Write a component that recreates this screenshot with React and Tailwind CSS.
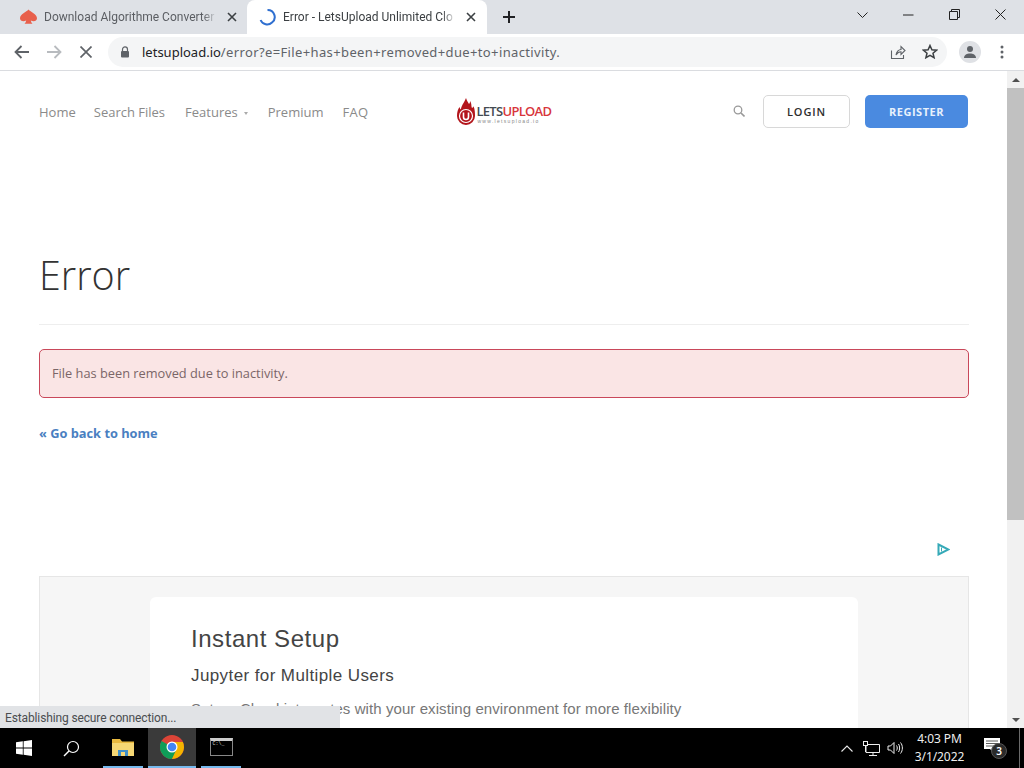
import React from "react";

const Ui = "font-['Noto_Sans','Open_Sans',sans-serif]";
const Chrome = "font-['Roboto','Noto_Sans',sans-serif]";

function CloseX({ size = 10, color = "#3c4043", width = 1.6 }) {
  return (
    <svg width={size} height={size} viewBox="0 0 10 10" className="shrink-0">
      <path d="M1 1L9 9M9 1L1 9" stroke={color} strokeWidth={width} fill="none" />
    </svg>
  );
}

function SpadeIcon() {
  return (
    <svg width="17" height="16" viewBox="0 0 17 16">
      <path d="M8.500 .5C10.500 3 17 5 17 9.300C17 12 13.800 13.300 10.800 11.600C11 12.800 11.500 13.700 12.500 14.800H4.500C5.500 13.700 6 12.800 6.200 11.600C3.200 13.300 0 12 0 9.300C0 5 6.500 3 8.500 .5Z" fill="#e8604c" />
    </svg>
  );
}

function Spinner() {
  return (
    <svg width="18" height="18" viewBox="0 0 18 18">
      <path d="M9.500 2A7 7 0 0 1 14 14.500A7 7 0 0 1 2.600 12" stroke="#2f6fd0" strokeWidth="2" fill="none" />
    </svg>
  );
}

function Tab({ active, icon, title, fade }) {
  return (
    <div className={`relative flex h-full items-center ${active ? "w-[240px] rounded-t-[8px] bg-white pl-[11px] pr-[11px]" : "w-[239px] pl-[12px] pr-[10px]"}`}>
      <span className={`flex shrink-0 items-center ${active ? "w-[25px]" : "w-[24px]"}`}>{icon}</span>
      <span className={`min-w-0 flex-1 overflow-hidden whitespace-nowrap text-[12px] leading-[16px] ${Chrome} ${active ? "text-[#3c4043]" : "text-[#5b5e63]"} ${fade}`}>
        {title}
      </span>
      <span className="ml-[10px] flex w-[10px] shrink-0 items-center">
        <CloseX />
      </span>
    </div>
  );
}

function TitleBar() {
  return (
    <div className="flex h-[34px] shrink-0 items-end bg-[#dee1e6] pl-[8px]">
      <Tab icon={<SpadeIcon />} title="Download Algorithme Converter" fade="[mask-image:linear-gradient(90deg,#000_92%,transparent)]" />
      <Tab active icon={<Spinner />} title="Error - LetsUpload Unlimited Clo" fade="[mask-image:linear-gradient(90deg,#000_92%,transparent)]" />
      <div className="ml-[15px] flex h-full items-center">
        <svg width="14" height="14" viewBox="0 0 14 14">
          <path d="M7 1V13M1 7H13" stroke="#202124" strokeWidth="2" />
        </svg>
      </div>
      <div className="ml-auto flex h-full items-start pt-[9px]">
        <svg width="11" height="10" viewBox="0 0 11 10" className="mr-[35px] mt-[1px]">
          <path d="M.5 2.500L5.500 7.500L10.500 2.500" stroke="#222" strokeWidth="1" fill="none" />
        </svg>
        <svg width="11" height="10" viewBox="0 0 11 10" className="mr-[35px] mt-[1px]">
          <path d="M0 5H10.500" stroke="#222" strokeWidth="1" fill="none" />
        </svg>
        <svg width="11" height="11" viewBox="0 0 11 11" className="mr-[35px]">
          <path d="M.5 2.500H8.500V10.500H.5ZM2.500 2.500V.5H10.500V8.500H8.500" stroke="#222" strokeWidth="1" fill="none" />
        </svg>
        <svg width="11" height="11" viewBox="0 0 11 11" className="mr-[18px]">
          <path d="M.5 .5L10.500 10.500M10.500 .5L.5 10.500" stroke="#222" strokeWidth="1" fill="none" />
        </svg>
      </div>
    </div>
  );
}

function Toolbar() {
  return (
    <div className="flex h-[37px] shrink-0 items-center border-b border-[#dadce0] bg-white pb-[1px]">
      <svg width="16" height="14" viewBox="0 0 16 14" className="ml-[14px]">
        <path d="M15 7H2M7.500 1L1.500 7L7.500 13" stroke="#5f6368" strokeWidth="1.800" fill="none" />
      </svg>
      <svg width="16" height="14" viewBox="0 0 16 14" className="ml-[16px]">
        <path d="M1 7H14M8.500 1L14.500 7L8.500 13" stroke="#b8bbbf" strokeWidth="1.800" fill="none" />
      </svg>
      <svg width="12" height="12" viewBox="0 0 12 12" className="ml-[18px]">
        <path d="M.5 .5L11.500 11.500M11.500 .5L.5 11.500" stroke="#5f6368" strokeWidth="1.700" fill="none" />
      </svg>
      <div className="ml-[16px] flex h-[30px] w-[839px] items-center rounded-full bg-[#f4f5f6] pl-[12px]">
        <svg width="10" height="12" viewBox="0 0 10 12">
          <path d="M2.500 5V3.400A2.500 2.500 0 0 1 7.500 3.400V5" stroke="#5f6368" strokeWidth="1.200" fill="none" />
          <rect x="1" y="5" width="8" height="6.500" rx="1" fill="#5f6368" />
        </svg>
        <span className="ml-[12px] text-[13px] leading-[18px] text-[#5f6368]">
          <span className="text-[#202124]">letsupload.io</span>
          <span className="tracking-[0.37px]">/error?e=File+has+been+removed+due+to+inactivity.</span>
        </span>
        <svg width="16" height="16" viewBox="0 0 16 16" className="ml-auto">
          <path d="M1.500 6.500V14.500H13.500V11M6 11C6.500 7.500 9 5.500 11 5.500V2.500L15 6.500L11 10.500V7.800C9.500 7.800 7.500 8.800 6 11Z" stroke="#5f6368" strokeWidth="1.100" fill="none" />
        </svg>
        <svg width="16" height="15" viewBox="0 0 16 15" className="ml-[16px] mr-[9px]">
          <path d="M8 1.500L9.900 5.800L14.500 6.200L11 9.200L12.100 13.700L8 11.300L3.900 13.700L5 9.200L1.500 6.200L6.100 5.800Z" stroke="#3c4043" strokeWidth="1.500" fill="none" />
        </svg>
      </div>
      <div className="ml-[12px] flex h-[22px] w-[22px] items-center justify-center rounded-full bg-[#dfe1e5]">
        <svg width="14" height="14" viewBox="0 0 14 14">
          <circle cx="7" cy="4" r="3" fill="#5f6368" />
          <path d="M1 13C1 9.800 4 8.500 7 8.500S13 9.800 13 13Z" fill="#5f6368" />
        </svg>
      </div>
      <svg width="4" height="14" viewBox="0 0 4 14" className="ml-[19px]">
        <circle cx="2" cy="2" r="1.500" fill="#5f6368" />
        <circle cx="2" cy="7" r="1.500" fill="#5f6368" />
        <circle cx="2" cy="12" r="1.500" fill="#5f6368" />
      </svg>
    </div>
  );
}

function Logo() {
  return (
    <div className="flex items-center">
      <svg width="18" height="27" viewBox="0 0 18 27" className="shrink-0">
        <path d="M9 0C10 3 11 4 12 6C13 5 13 4 13 3C15 6 14 8 15 10C16 9.500 16.500 9 16.500 8C18 12 18 15 18 18A9 9 0 0 1 0 18C0 14 1 11 2.500 9C3 10 3 11 4 11.500C4 8 7 5 9 0Z" fill="#b3151b" />
        <circle cx="9" cy="18" r="6.500" fill="none" stroke="#fff" strokeWidth="1.200" />
        <path d="M6.500 14.500V19A2.500 2.500 0 0 0 11.500 19V14.500" stroke="#fff" strokeWidth="1.600" fill="none" />
      </svg>
      <div className="ml-[1px] mt-[5px] flex flex-col">
        <span className="whitespace-nowrap font-['Open_Sans',sans-serif] text-[13px] font-semibold leading-[13px] tracking-[-0.7px]">
          <span className="text-[#444b52]">LETS</span>
          <span className="text-[#d8363c]">UPLOAD</span>
        </span>
        <span className="whitespace-nowrap pl-[1px] font-['Liberation_Sans',sans-serif] text-[5px] leading-[6px] tracking-[1.3px] text-[#888]">
          www.letsupload.io
        </span>
      </div>
    </div>
  );
}

function SiteNav() {
  return (
    <div className="flex h-[33px] items-center pl-[39px] pr-[39px] font-['Open_Sans',sans-serif]">
      <nav className="mt-[2px] flex items-center text-[13px] text-[#8a8a8a]">
        <span>Home</span>
        <span className="ml-[18px]">Search Files</span>
        <span className="ml-[20px] flex items-center">
          Features
          <span className="ml-[6px] mt-[2px] h-0 w-0 border-x-[2.500px] border-t-[3px] border-x-transparent border-t-[#aaa]" />
        </span>
        <span className="ml-[20px]">Premium</span>
        <span className="ml-[19px] tracking-[0.3px]">FAQ</span>
      </nav>
      <div className="ml-[89px]">
        <Logo />
      </div>
      <svg width="12" height="12" viewBox="0 0 12 12" className="ml-auto -mt-[2px]">
        <circle cx="5" cy="5" r="3.800" stroke="#999" strokeWidth="1.300" fill="none" />
        <path d="M8 8L11.500 11.500" stroke="#999" strokeWidth="1.600" />
      </svg>
      <button className="ml-[18px] h-[33px] w-[87px] rounded-[5px] border border-[#d8d8d8] bg-white pt-[1px] text-[11px] font-semibold tracking-[0.9px] text-[#2e2e2e]">
        LOGIN
      </button>
      <button className="ml-[15px] h-[33px] w-[103px] rounded-[5px] bg-[#4a8ae0] pt-[1px] text-[11px] font-bold tracking-[0.5px] text-[#e8f1fc]">
        REGISTER
      </button>
    </div>
  );
}

function AdCard() {
  return (
    <div className="ml-[39px] mr-[38px] mt-[17px] h-[300px] border border-[#e6e6e6] bg-[#f6f6f6] px-[110px] pt-[20px] font-['Liberation_Sans',sans-serif]">
      <div className="h-[300px] rounded-[6px] bg-white pl-[41px] pt-[27px]">
        <div className="text-[24px] leading-[30px] tracking-[0.55px] text-[#444]">Instant Setup</div>
        <div className="mt-[12px] text-[17px] leading-[20px] tracking-[0.4px] text-[#444]">Jupyter for Multiple Users</div>
        <div className="mt-[13px] text-[15px] leading-[20px] tracking-[0.08px] text-[#777]">
          Saturn Cloud integrates with your existing environment for more flexibility
        </div>
      </div>
    </div>
  );
}

function Scrollbar() {
  return (
    <div className="flex w-[17px] shrink-0 flex-col items-center bg-[#f1f1f1]">
      <div className="flex h-[17px] w-full shrink-0 items-center justify-center">
        <span className="h-0 w-0 border-x-[4px] border-b-[4px] border-x-transparent border-b-[#505050]" />
      </div>
      <div className="h-[432px] w-full shrink-0 bg-[#c1c1c1]" />
      <div className="flex-1" />
      <div className="flex h-[17px] w-full shrink-0 items-center justify-center">
        <span className="h-0 w-0 border-x-[4px] border-t-[4px] border-x-transparent border-t-[#505050]" />
      </div>
    </div>
  );
}

function Page() {
  return (
    <div className="relative flex min-h-0 flex-1">
      <div className="min-w-0 flex-1 overflow-hidden bg-white pt-[24px]">
        <SiteNav />
        <div className="ml-[39px] mr-[38px] font-['Open_Sans',sans-serif]">
          <h1 className="mt-[120px] border-b border-[#eeeeee] pb-[22px] text-[39.500px] font-light leading-[54px] text-[#333]">Error</h1>
          <div className="mt-[24px] flex h-[49px] items-center rounded-[5px] border border-[#c9485a] bg-[#fae5e5] pl-[12px] text-[12.800px] text-[#7a6668]">
            File has been removed due to inactivity.
          </div>
          <a className="mt-[26px] block text-[12.800px] font-bold leading-[18px] text-[#4a7fc1]">« Go back to home</a>
          <div className="mt-[101px] flex h-[16px] justify-end pr-[19px]">
            <svg width="13" height="13" viewBox="0 0 13 13">
              <path d="M1.500 1.500L11.500 6.500L1.500 11.500Z" stroke="#36aab8" strokeWidth="2" fill="none" />
              <path d="M4.500 4.500V8.500" stroke="#36aab8" strokeWidth="1" />
            </svg>
          </div>
        </div>
        <AdCard />
      </div>
      <Scrollbar />
      <div className={`absolute bottom-0 left-0 flex h-[22px] w-[340px] items-center bg-[#e1e3e6] pl-[5px] pt-[2px] text-[12px] tracking-[-0.13px] text-[#4a4d50] ${Chrome}`}>
        Establishing secure connection...
      </div>
    </div>
  );
}

function WinIcon() {
  return (
    <svg width="16" height="16" viewBox="0 0 16 16">
      <path d="M0 2.300L6.800 1.300V7.600H0ZM7.600 1.200L16 0V7.600H7.600ZM0 8.400H6.800V14.700L0 13.700ZM7.600 8.400H16V16L7.600 14.800Z" fill="#fff" />
    </svg>
  );
}

function ChromeIcon() {
  return (
    <svg width="24" height="24" viewBox="0 0 24 24">
      <circle cx="12" cy="12" r="12" fill="#db4437" />
      <path d="M12 12L1.600 6A12 12 0 0 0 12 24L18 13.700Z" fill="#0f9d58" />
      <path d="M12 7H22.900A12 12 0 0 1 12 24L17 13Z" fill="#f4b400" />
      <circle cx="12" cy="12" r="5.500" fill="#fff" />
      <circle cx="12" cy="12" r="4.300" fill="#4285f4" />
    </svg>
  );
}

function TaskApp({ children, active }) {
  return (
    <div className={`flex h-full items-center justify-center border-b-[2px] border-[#76b9ed] ${active ? "w-[48px] bg-[#3a3a3a]" : "w-[40px]"}`}>
      {children}
    </div>
  );
}

function Taskbar() {
  return (
    <div className={`flex h-[40px] shrink-0 items-center bg-black text-white ${Ui}`}>
      <div className="ml-[16px]"><WinIcon /></div>
      <svg width="17" height="17" viewBox="0 0 17 17" className="ml-[31px]">
        <circle cx="10" cy="7" r="5.500" stroke="#fff" strokeWidth="1.200" fill="none" />
        <path d="M6 11L1 16" stroke="#fff" strokeWidth="1.400" />
      </svg>
      <div className="ml-[23px] flex h-full gap-[5px]">
        <TaskApp>
          <svg width="22" height="19" viewBox="0 0 22 19">
            <path d="M0 1H8L10 3.500H22V18H0Z" fill="#e9b93f" />
            <path d="M0 5H22V18H0Z" fill="#f6d774" />
            <path d="M6 12H16V18H6Z" fill="#3f8fc9" />
            <path d="M9 14H13V18H9Z" fill="#f6d774" />
          </svg>
        </TaskApp>
        <TaskApp active><ChromeIcon /></TaskApp>
        <TaskApp>
          <div className="h-[18px] w-[23px] border border-[#888] border-t-[3px] border-t-[#ccc] bg-black pl-[2px] font-['Liberation_Mono',monospace] text-[5px] leading-[7px] text-[#ddd]">C:\_</div>
        </TaskApp>
      </div>
      <div className="ml-auto flex h-full items-center">
        <svg width="12" height="7" viewBox="0 0 12 7">
          <path d="M.5 6.500L6 1L11.500 6.500" stroke="#e8e8e8" strokeWidth="1.100" fill="none" />
        </svg>
        <svg width="17" height="15" viewBox="0 0 17 15" className="ml-[10px]">
          <path d="M3 3.500H16.500V11.500H3V3.500M10 11.500V14M6 14.500H14" stroke="#eee" strokeWidth="1" fill="#000" />
          <rect x=".5" y=".5" width="4" height="4" stroke="#eee" fill="#000" />
          <path d="M2.500 4.500V11" stroke="#eee" />
        </svg>
        <svg width="17" height="14" viewBox="0 0 17 14" className="ml-[7px]">
          <path d="M1 5H3.500L7 1.500V12.500L3.500 9H1ZM9.500 4.500C10.500 6 10.500 8 9.500 9.500M11.500 3C13 5 13 9 11.500 11M13.500 1.500C16 4.500 16 9.500 13.500 12.500" stroke="#eee" strokeWidth="1" fill="none" />
        </svg>
        <div className="ml-[3px] flex w-[65px] flex-col items-center text-[12px] leading-[18px] tracking-[-0.1px] text-[#eee]">
          <span>4:03 PM</span>
          <span>3/1/2022</span>
        </div>
        <div className="relative ml-[12px] mr-[19px] h-[22px] w-[16px]">
          <svg width="16" height="16" viewBox="0 0 16 16">
            <path d="M0 1H16V12H9V15L6 12H0Z" fill="#fff" />
            <path d="M2 4H14M2 6.500H14M2 9H14" stroke="#333" strokeWidth=".8" />
          </svg>
          <span className="absolute left-[7px] top-[6px] flex h-[16px] w-[16px] items-center justify-center rounded-full border border-[#555] bg-[#2a2a2a] text-[10px] font-semibold leading-none text-white">3</span>
        </div>
        <div className="h-full w-[1px] bg-[#6a6a6a]" />
        <div className="w-[4px]" />
      </div>
    </div>
  );
}

export default function App() {
  return (
    <div className={`flex h-[768px] w-[1024px] flex-col overflow-hidden bg-white ${Ui}`}>
      <TitleBar />
      <Toolbar />
      <Page />
      <Taskbar />
    </div>
  );
}
